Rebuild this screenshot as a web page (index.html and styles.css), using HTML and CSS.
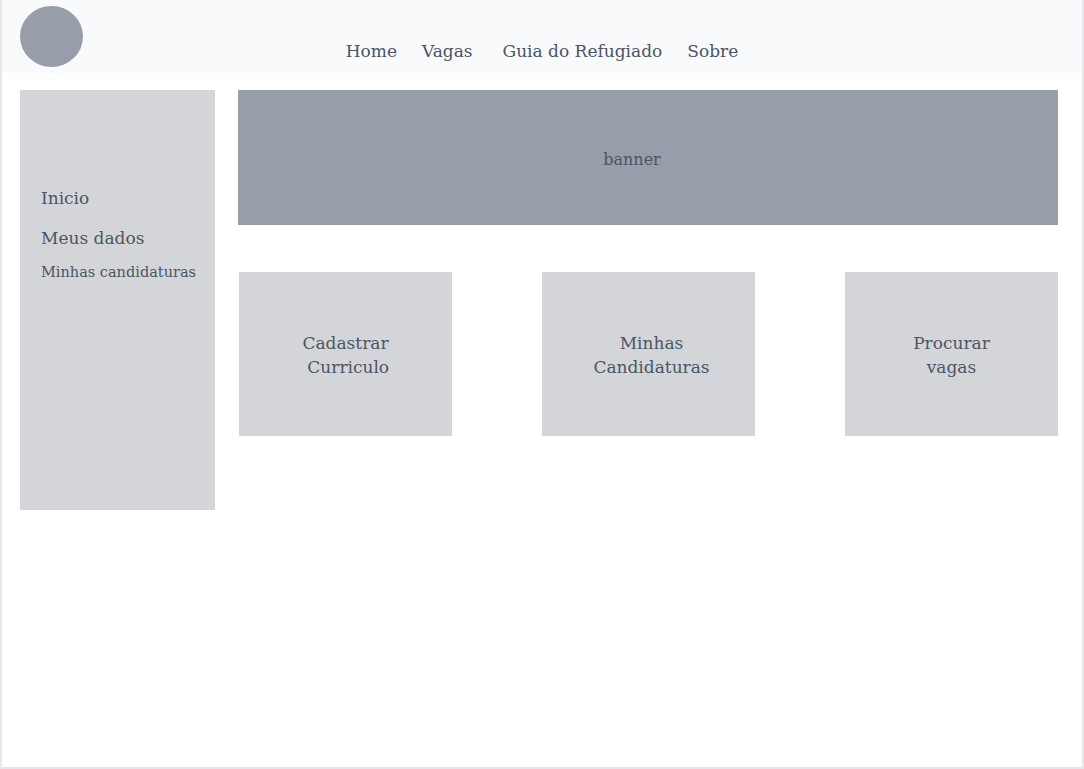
FILE: index.html
```
<!doctype html>
<html lang="pt">
<head>
  <meta charset="utf-8">
  <title>Painel do candidato</title>
  <meta name="viewport" content="width=device-width, initial-scale=1">
  <link rel="stylesheet" href="styles.css">
</head>

<body>
  <div class="page">
    <header class="topbar">
      <div class="logo"></div>
      <nav class="nav">
        <a href="#">Home</a>
        <a href="#">Vagas</a>
        <a href="#" class="nav-wide">Guia do Refugiado</a>
        <a href="#">Sobre</a>
      </nav>
      <div></div>
    </header>

    <main class="main">
      <aside class="sidebar">
        <a href="#" class="side-link">Inicio</a>
        <a href="#" class="side-link">Meus dados</a>
        <a href="#" class="side-link side-small">Minhas candidaturas</a>
      </aside>

      <section class="content">
        <div class="banner">banner</div>
        <div class="cards">
          <a href="#" class="card">Cadastrar<br>&nbsp;Curriculo</a>
          <a href="#" class="card card-mid">Minhas<br>Candidaturas</a>
          <a href="#" class="card">Procurar<br>vagas</a>
        </div>
      </section>
    </main>
  </div>
</body>
</html>
```

FILE: styles.css
```
* {
  box-sizing:border-box;
}
body {
  margin:0;
  font-family:'DejaVu Serif', 'Liberation Serif', serif;
  color:#4b5563;
  background:#fff;
}
a {
  color:inherit;
  text-decoration:none;
}
.page {
  height:769px;
  border:2px solid #e5e7eb;
  border-top:0;
}
.topbar {
  display:grid;
  grid-template-columns:1fr auto 1fr;
  height:73px;
  padding:6px 18px 0;
  background:#f9fafb;
}
.logo {
  width:63px;
  height:61px;
  border-radius:50%;
  background:#979ea9;
}
.nav {
  display:flex;
  align-items:center;
  align-self:end;
  gap:25px;
  padding-bottom:12px;
  font-size:17px;
  line-height:20px;
}
.nav-wide {
  margin-left:5px;
}
.main {
  display:flex;
  gap:23px;
  padding:17px 24px 0 18px;
}
.sidebar {
  display:flex;
  flex-direction:column;
  width:195px;
  height:420px;
  padding:98px 0 0 21px;
  background:#d3d5d9;
}
.side-link {
  font-size:17px;
  line-height:20px;
  margin-bottom:20px;
}
.side-small {
  font-size:14.5px;
  margin-top:-6px;
}
.content {
  flex:1;
}
.banner {
  display:flex;
  align-items:center;
  justify-content:center;
  height:135px;
  padding:4px 32px 0 0;
  background:#979ea9;
  font-size:16px;
}
.cards {
  display:flex;
  justify-content:space-between;
  margin:47px 0 0 1px;
}
.card {
  display:flex;
  align-items:center;
  justify-content:center;
  width:213px;
  height:164px;
  padding-top:1px;
  background:#d3d5d9;
  text-align:center;
  font-size:17px;
  line-height:24px;
}
.card-mid {
  padding-left:6px;
}
```
